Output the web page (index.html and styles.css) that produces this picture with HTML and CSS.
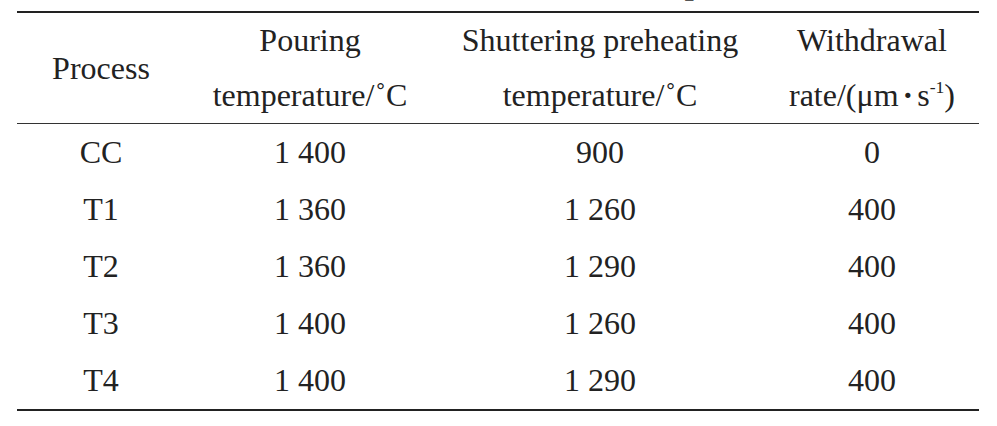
FILE: index.html
```html
<!DOCTYPE html>
<html lang="en">
<head>
<meta charset="utf-8">
<title>Process parameters</title>
<link rel="stylesheet" href="styles.css">
</head>
<body>
<div class="page">
  <div class="caption">Table 1 Process parameters</div>
  <table class="params">
    <colgroup>
      <col class="c1"><col class="c2"><col class="c3"><col class="c4">
    </colgroup>
    <thead>
      <tr>
        <th class="mid">Process</th>
        <th>Pouring<br>temperature/<span class="deg">˚</span>C</th>
        <th>Shuttering preheating<br>temperature/<span class="deg">˚</span>C</th>
        <th>Withdrawal<br>rate/(μm<span class="dot">·</span>s<sup class="sup">-1</sup>)</th>
      </tr>
    </thead>
    <tbody>
      <tr><td>CC</td><td>1 400</td><td>900</td><td>0</td></tr>
      <tr><td>T1</td><td>1 360</td><td>1 260</td><td>400</td></tr>
      <tr><td>T2</td><td>1 360</td><td>1 290</td><td>400</td></tr>
      <tr><td>T3</td><td>1 400</td><td>1 260</td><td>400</td></tr>
      <tr><td>T4</td><td>1 400</td><td>1 290</td><td>400</td></tr>
    </tbody>
  </table>
</div>
</body>
</html>
```
FILE: styles.css
```css
html, body {
  margin: 0;
  padding: 0;
  background: #ffffff;
}
body {
  font-family: "Liberation Serif", "Times New Roman", serif;
  color: #222222;
  overflow: hidden;
}
.page {
  padding: 0 18px 0 17px;
}
.caption {
  margin-top: -33px;
  height: 32px;
  padding-left: 450px;
  font-size: 32px;
  line-height: 32px;
  font-weight: bold;
  color: #555;
  white-space: nowrap;
}
.params {
  margin-top: 12px;
  width: 962px;
  border-collapse: collapse;
  table-layout: fixed;
  border-top: 2px solid #222;
  border-bottom: 2px solid #222;
  font-size: 32px;
}
.c1 { width: 168px; }
.c2 { width: 250px; }
.c3 { width: 330px; }
.c4 { width: 214px; }
.params th {
  font-weight: normal;
  text-align: center;
  line-height: 55px;
  padding: 0;
  white-space: nowrap;
  border-bottom: 1px solid #333;
  vertical-align: middle;
}
.params td {
  text-align: center;
  padding: 0;
  height: 57px;
  line-height: 57px;
  vertical-align: middle;
}
.deg {
  margin-left: 1px;
}
.dot {
  font-weight: bold;
  margin: 0 4px;
}
.sup {
  font-size: 0.55em;
  line-height: 0;
  vertical-align: 0.75em;
}
```
